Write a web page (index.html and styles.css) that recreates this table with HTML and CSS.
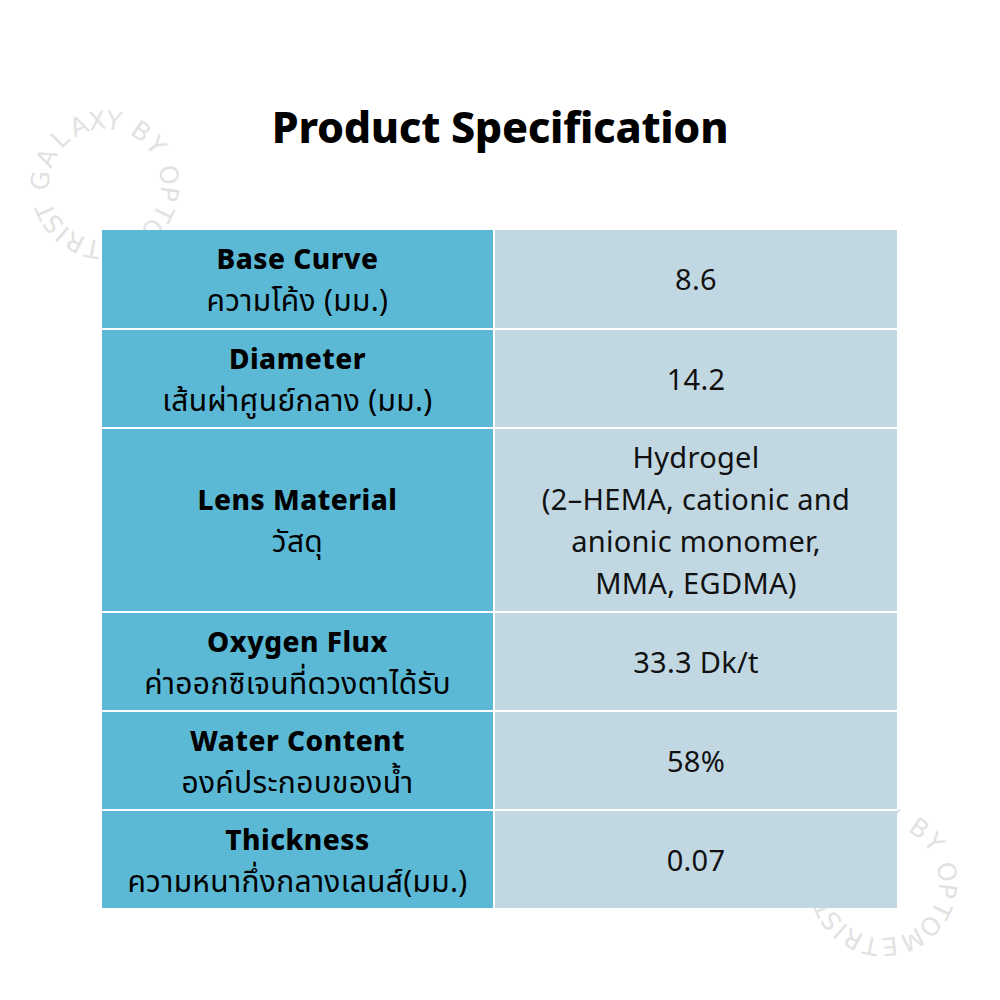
FILE: index.html
```html
<!DOCTYPE html>
<html lang="th">
<head>
<meta charset="utf-8">
<title>Product Specification</title>
<link rel="stylesheet" href="styles.css">
</head>
<body>
<div class="page">
  <svg class="watermark" width="1000" height="1000" viewBox="0 0 1000 1000" aria-hidden="true">
    <defs>
      <g id="ring">
        <text transform="rotate(274)" y="-56">G</text>
        <text transform="rotate(295)" y="-56">A</text>
        <text transform="rotate(316)" y="-56">L</text>
        <text transform="rotate(336)" y="-56">A</text>
        <text transform="rotate(353)" y="-56">X</text>
        <text transform="rotate(8)" y="-56">Y</text>
        <text transform="rotate(34)" y="-56">B</text>
        <text transform="rotate(52)" y="-56">Y</text>
        <text transform="rotate(81)" y="-56">O</text>
        <text transform="rotate(98)" y="-56">P</text>
        <text transform="rotate(116)" y="-56">T</text>
        <text transform="rotate(133)" y="-56">O</text>
        <text transform="rotate(153)" y="-56">M</text>
        <text transform="rotate(174)" y="-56">E</text>
        <text transform="rotate(191)" y="-56">T</text>
        <text transform="rotate(208)" y="-56">R</text>
        <text transform="rotate(221)" y="-56">I</text>
        <text transform="rotate(233)" y="-56">S</text>
        <text transform="rotate(246)" y="-56">T</text>
      </g>
    </defs>
    <g class="ring-text">
      <use href="#ring" transform="translate(105 185)"/>
      <use href="#ring" transform="translate(883 882)"/>
    </g>
  </svg>

  <h1 class="title">Product Specification</h1>

  <div class="spec">
    <div class="cell label"><strong>Base Curve</strong><span>ความโค้ง (มม.)</span></div>
    <div class="cell value">8.6</div>

    <div class="cell label"><strong>Diameter</strong><span>เส้นผ่าศูนย์กลาง (มม.)</span></div>
    <div class="cell value">14.2</div>

    <div class="cell label"><strong>Lens Material</strong><span>วัสดุ</span></div>
    <div class="cell value"><span>Hydrogel</span><span>(2–HEMA, cationic and</span><span>anionic monomer,</span><span>MMA, EGDMA)</span></div>

    <div class="cell label"><strong>Oxygen Flux</strong><span>ค่าออกซิเจนที่ดวงตาได้รับ</span></div>
    <div class="cell value">33.3 Dk/t</div>

    <div class="cell label"><strong>Water Content</strong><span>องค์ประกอบของน้ำ</span></div>
    <div class="cell value">58%</div>

    <div class="cell label"><strong>Thickness</strong><span>ความหนากึ่งกลางเลนส์(มม.)</span></div>
    <div class="cell value">0.07</div>
  </div>
</div>
</body>
</html>
```
FILE: styles.css
```css
html, body {
  margin: 0;
  padding: 0;
  background: #ffffff;
}

.page {
  position: relative;
  width: 1000px;
  height: 1000px;
  padding-top: 101px;
  box-sizing: border-box;
  display: flex;
  flex-direction: column;
  font-family: "Noto Sans", "Noto Sans Thai", "Open Sans", sans-serif;
  color: #000;
  overflow: hidden;
}

.watermark {
  position: absolute;
  top: 0;
  left: 0;
  z-index: 0;
}

.ring-text {
  font-family: "DejaVu Sans", "Open Sans", sans-serif;
  font-size: 25px;
  font-weight: 400;
  fill: #e2e2e2;
  text-anchor: middle;
}

.title {
  position: relative;
  z-index: 1;
  margin: 0;
  text-align: center;
  font-size: 43px;
  line-height: 52px;
  font-weight: 800;
  letter-spacing: -0.3px;
}

.spec {
  position: relative;
  z-index: 1;
  width: 795px;
  margin: 77px 0 0 102px;
  display: grid;
  grid-template-columns: 391px 402px;
  grid-template-rows: 98px 97px 182px 97px 97px 97px;
  gap: 2px;
  background: #ffffff;
}

.cell {
  display: flex;
  flex-direction: column;
  align-items: center;
  justify-content: center;
  text-align: center;
  line-height: 42px;
}

.label {
  background: #5bb9d5;
  font-size: 30px;
}

.label strong {
  font-size: 28px;
  font-weight: 800;
  letter-spacing: 0.5px;
}

.label span {
  letter-spacing: 0.3px;
}

.value {
  background: #c1d8e3;
  color: #111;
  font-size: 29px;
  letter-spacing: 0.3px;
}
```
